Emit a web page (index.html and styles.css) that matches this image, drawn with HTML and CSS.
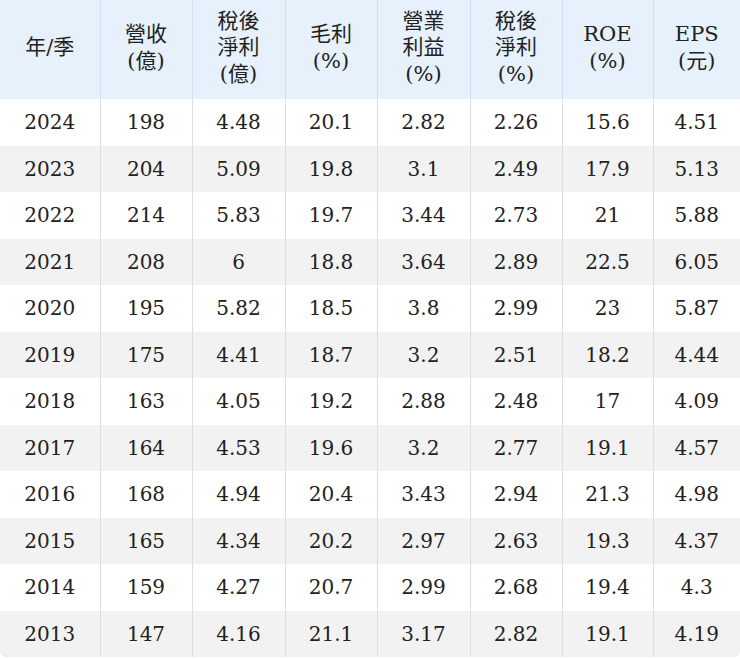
FILE: index.html
```html
<!DOCTYPE html>
<html lang="zh-Hant">
<head>
<meta charset="utf-8">
<link rel="stylesheet" href="styles.css">
</head>
<body>
<div class="wrap">
<table class="fin">
<colgroup>
<col class="c0"><col class="c1"><col class="c2"><col class="c3"><col class="c4"><col class="c5"><col class="c6"><col class="c7">
</colgroup>
<thead>
<tr>
<th>年/季</th>
<th>營收<br>(億)</th>
<th>稅後<br>淨利<br>(億)</th>
<th>毛利<br>(%)</th>
<th>營業<br>利益<br>(%)</th>
<th>稅後<br>淨利<br>(%)</th>
<th>ROE<br>(%)</th>
<th>EPS<br>(元)</th>
</tr>
</thead>
<tbody>
<tr><td>2024</td><td>198</td><td>4.48</td><td>20.1</td><td>2.82</td><td>2.26</td><td>15.6</td><td>4.51</td></tr>
<tr><td>2023</td><td>204</td><td>5.09</td><td>19.8</td><td>3.1</td><td>2.49</td><td>17.9</td><td>5.13</td></tr>
<tr><td>2022</td><td>214</td><td>5.83</td><td>19.7</td><td>3.44</td><td>2.73</td><td>21</td><td>5.88</td></tr>
<tr><td>2021</td><td>208</td><td>6</td><td>18.8</td><td>3.64</td><td>2.89</td><td>22.5</td><td>6.05</td></tr>
<tr><td>2020</td><td>195</td><td>5.82</td><td>18.5</td><td>3.8</td><td>2.99</td><td>23</td><td>5.87</td></tr>
<tr><td>2019</td><td>175</td><td>4.41</td><td>18.7</td><td>3.2</td><td>2.51</td><td>18.2</td><td>4.44</td></tr>
<tr><td>2018</td><td>163</td><td>4.05</td><td>19.2</td><td>2.88</td><td>2.48</td><td>17</td><td>4.09</td></tr>
<tr><td>2017</td><td>164</td><td>4.53</td><td>19.6</td><td>3.2</td><td>2.77</td><td>19.1</td><td>4.57</td></tr>
<tr><td>2016</td><td>168</td><td>4.94</td><td>20.4</td><td>3.43</td><td>2.94</td><td>21.3</td><td>4.98</td></tr>
<tr><td>2015</td><td>165</td><td>4.34</td><td>20.2</td><td>2.97</td><td>2.63</td><td>19.3</td><td>4.37</td></tr>
<tr><td>2014</td><td>159</td><td>4.27</td><td>20.7</td><td>2.99</td><td>2.68</td><td>19.4</td><td>4.3</td></tr>
<tr><td>2013</td><td>147</td><td>4.16</td><td>21.1</td><td>3.17</td><td>2.82</td><td>19.1</td><td>4.19</td></tr>
</tbody>
</table>
</div>
</body>
</html>
```
FILE: styles.css
```css
html, body {
  margin: 0;
  padding: 0;
  background: #ffffff;
}
.wrap {
  width: 740px;
  border-radius: 0 0 12px 12px;
  overflow: hidden;
  box-shadow: 0 1px 3px rgba(0, 0, 0, 0.18);
}
.fin {
  width: 740px;
  border-collapse: collapse;
  table-layout: fixed;
  font-family: "DejaVu Serif", "Noto Sans CJK TC", serif;
  color: #222222;
}
.c0 { width: 100px; }
.c1 { width: 92px; }
.c2 { width: 93px; }
.c3 { width: 92px; }
.c4 { width: 93px; }
.c5 { width: 92px; }
.c6 { width: 91px; }
.c7 { width: 87px; }
.fin th {
  background: #e6f1fc;
  font-weight: normal;
  font-size: 21px;
  line-height: 26.5px;
  height: 99px;
  padding: 0 0 4px 0;
  box-sizing: border-box;
  text-align: center;
  vertical-align: middle;
  border-left: 1px solid #d3e0ee;
}
.fin td {
  font-size: 20px;
  height: 46.5px;
  padding: 0;
  text-align: center;
  vertical-align: middle;
  border-left: 1px solid #dedede;
}
.fin th:first-child,
.fin td:first-child {
  border-left: none;
}
.fin tbody tr:nth-child(even) td {
  background: #f2f2f2;
}
```
